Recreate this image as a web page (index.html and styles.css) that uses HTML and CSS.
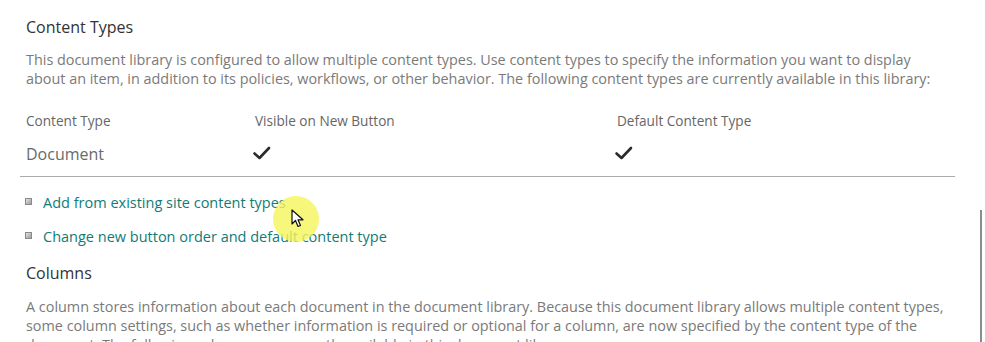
FILE: index.html
```html
<!DOCTYPE html>
<html lang="en">

<head>
    <meta charset="UTF-8">
    <meta name="viewport" content="width=device-width, initial-scale=1.0">
    <title>Document Library Settings</title>
    <link rel="stylesheet" href="styles.css">
</head>

<body>
    <div class="page">
        <section class="section">
            <h2 class="title">Content Types</h2>
            <p class="desc">This document library is configured to allow multiple content types. Use content types to specify the information you want to display about an item, in addition to its policies, workflows, or other behavior. The following content types are currently available in this library:</p>
            <table class="ct-table">
                <thead>
                    <tr>
                        <th class="col-name">Content Type</th>
                        <th class="col-visible">Visible on New Button</th>
                        <th>Default Content Type</th>
                    </tr>
                </thead>
                <tbody>
                    <tr>
                        <td class="name">Document</td>
                        <td>
                            <svg class="check" width="20" height="16" viewBox="0 0 20 16">
                                <path d="M2.5 8.5 L7.5 13 L17 3" fill="none" stroke="#2b2b2b" stroke-width="2.6" stroke-linecap="round" stroke-linejoin="round" />
                            </svg>
                        </td>
                        <td>
                            <svg class="check" width="20" height="16" viewBox="0 0 20 16">
                                <path d="M2.5 8.5 L7.5 13 L17 3" fill="none" stroke="#2b2b2b" stroke-width="2.6" stroke-linecap="round" stroke-linejoin="round" />
                            </svg>
                        </td>
                    </tr>
                </tbody>
            </table>
            <ul class="links">
                <li><a href="#">Add from existing site content types</a></li>
                <li><a href="#">Change new button order and default content type</a></li>
            </ul>
        </section>

        <section class="section">
            <h2 class="title">Columns</h2>
            <p class="desc desc-wide">A column stores information about each document in the document library. Because this document library allows multiple content types, some column settings, such as whether information is required or optional for a column, are now specified by the content type of the document. The following columns are currently available in this document library:</p>
        </section>
    </div>

    <!-- mouse highlight from the screen recording -->
    <div class="pointer">
        <svg class="arrow" width="14" height="20" viewBox="0 0 14 20">
            <path d="M1 1 L1 15 L4.5 11.5 L7 17.5 L9.5 16.5 L7 10.8 L12 10.8 Z" fill="#fff" stroke="#111" stroke-width="1.2" stroke-linejoin="round" />
        </svg>
    </div>
    <div class="scrollbar"></div>
</body>

</html>
```
FILE: styles.css
```css
* {
    margin: 0;
    padding: 0;
}

body {
    background: #fff;
    font-family: "Open Sans", "Noto Sans", sans-serif;
    color: #777;
    overflow: hidden;
}

.page {
    width: 936px;
    padding: 17px 0 0 20px;
}

.title {
    font-size: 16px;
    font-weight: 400;
    line-height: 20px;
    color: #333;
    padding-left: 6px;
}

.desc {
    font-size: 14.4px;
    line-height: 19px;
    color: #7a7a7a;
    padding-left: 6px;
    margin-top: 13px;
    width: 920px;
}

.desc-wide {
    margin-top: 14px;
}

.ct-table {
    width: 935px;
    margin-top: 23px;
    border-collapse: collapse;
}

.ct-table th {
    text-align: left;
    font-size: 13.6px;
    font-weight: 400;
    line-height: 20px;
    color: #666;
    padding: 0 6px;
}

.ct-table .col-name {
    width: 217px;
}

.ct-table .col-visible {
    width: 350px;
}

.ct-table td {
    padding: 12px 6px 11px;
    line-height: 22px;
    vertical-align: middle;
    border-bottom: 1px solid #ababab;
}

.ct-table .name {
    font-size: 16px;
    color: #6a6a6a;
}

.check {
    display: block;
    margin-left: -3px;
    margin-top: -2px;
}

.links {
    list-style: none;
    margin-top: 16px;
    margin-bottom: 16px;
}

.links li {
    display: flex;
    align-items: center;
    line-height: 20px;
    font-size: 14.5px;
    margin-bottom: 14px;
}

.links li:last-child {
    margin-bottom: 0;
}

.links li::before {
    content: "";
    width: 5px;
    height: 5px;
    margin: -4px 11px 0 5px;
    border: 1px solid #8a8a8a;
    background: linear-gradient(135deg, #e2e2e2, #9c9c9c);
}

.links a {
    color: #0f7c78;
    text-decoration: none;
}

.pointer {
    position: absolute;
    left: 273px;
    top: 196px;
    width: 46px;
    height: 46px;
    border-radius: 50%;
    background: rgba(245, 245, 90, 0.8);
}

.pointer .arrow {
    position: absolute;
    left: 18px;
    top: 13px;
}

.scrollbar {
    position: absolute;
    left: 980px;
    top: 210px;
    width: 2px;
    height: 132px;
    background: #8c8c8c;
}
```
